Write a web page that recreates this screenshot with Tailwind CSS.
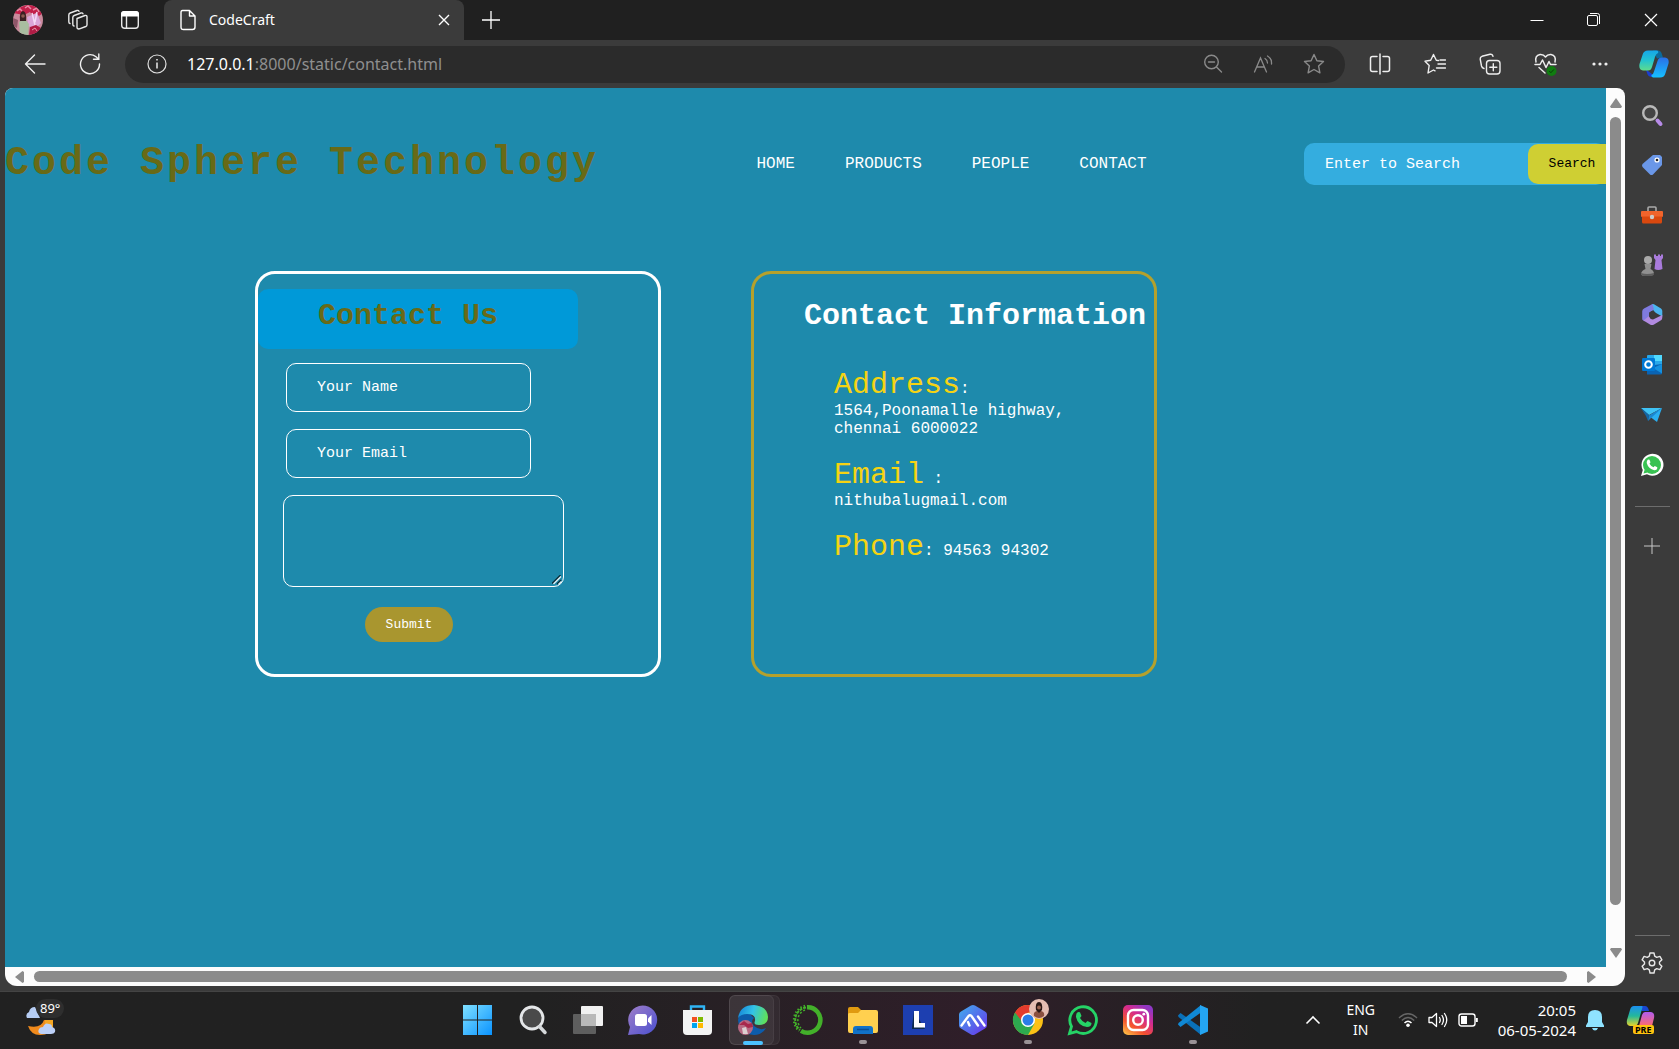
<!DOCTYPE html>
<html lang="en">
<head>
<meta charset="utf-8">
<title>CodeCraft</title>
<script src="https://cdn.jsdelivr.net/npm/@tailwindcss/browser@4"></script>
</head>
<body class="h-screen overflow-hidden flex flex-col bg-[#3b3b3b] text-white font-['Noto_Sans',sans-serif]">

<!-- tab strip -->
<div class="h-10 shrink-0 flex items-stretch bg-[#202020]">
  <div class="w-[164px] flex items-center pl-[13px] gap-[23px] bg-[#202020]">
    <button aria-label="Profile"><svg width="30" height="30" viewBox="0 0 30 30"><defs><clipPath id="pf"><circle cx="15" cy="15" r="15"/></clipPath></defs><g clip-path="url(#pf)"><rect width="30" height="30" fill="#c98a9c"/><path d="M0 8 8 2l6-2h12l4 8-4 3-3-3-4 2-2-3-6 3z" fill="#c2204a"/><path d="M4 6l3-2 2 2M12 3l3-2 3 3M20 5l4-2 2 4" stroke="#e98aa6" stroke-width="1.500" fill="none"/><path d="M14 12l10-4 4 10-6 6-7-3z" fill="#dba6d8"/><path d="M19 8l3 12M24 7l-2 10" stroke="#f3d9f5" stroke-width="1.500"/><path d="M6 17l6-3 4 5-1 12H7z" fill="#a9bda0"/><path d="M7 16q-1-9 3-10 4 1 3 10z" fill="#3a1f22"/><circle cx="10" cy="11" r="1.800" fill="#8a5a50"/><path d="M17 22l6-2 5 3-3 7h-9z" fill="#b01c45"/><path d="M19 25l3-2 2 3" stroke="#e79ab0" fill="none"/><path d="M0 13l5 2-1 8-4-2z" fill="#8e5668"/></g></svg></button>
    <button aria-label="Workspaces"><svg width="24" height="24" viewBox="0 0 24 24" fill="none" stroke="#e8e8e8" stroke-width="1.400" stroke-linejoin="round" stroke-linecap="round"><path d="M11 10.500l8-3q2-.5 2 1.300v8q0 1.200-1.200 1.700l-6.300 2.300q-2.500.6-2.500-1.500z"/><path d="M8 18q-1.200-.3-1.200-1.800V9.500q0-1.500 1.400-2L15 5q1.500-.4 2 .8"/><path d="M4 15.500q-1.200-.3-1.200-1.800V7q0-1.500 1.400-2L11 2.500q1.500-.4 2 .8"/></svg></button>
    <button aria-label="Tab actions" class="ml-[5px]"><svg width="24" height="24" viewBox="0 0 24 24"><rect x="3.700" y="3.700" width="16.600" height="16.600" rx="3" fill="none" stroke="#e8e8e8" stroke-width="1.400"/><path d="M3 8.500V6q0-3 3-3h12q3 0 3 3v2.500z" fill="#fff"/><path d="M8.500 8v12" stroke="#e8e8e8" stroke-width="1.400"/></svg></button>
  </div>
  <div class="w-[300px] flex items-center rounded-t-lg bg-[#3b3b3b] pl-[15px] pr-3">
    <svg width="18" height="22" viewBox="0 0 18 22" fill="none" stroke="#fff" stroke-width="1.400" stroke-linejoin="round"><path d="M3.500 1.500h7l5.500 5.500v11q0 2.500-2.500 2.500h-9Q2 20.500 2 18V3.500q0-2 1.500-2zM10.500 1.500V7H16"/></svg>
    <span class="ml-3 text-sm">CodeCraft</span>
    <button aria-label="Close tab" class="ml-auto"><svg width="16" height="16" viewBox="0 0 16 16" stroke="#fff" stroke-width="1.400"><path d="M3 3l10 10M13 3L3 13"/></svg></button>
  </div>
  <button aria-label="New tab" class="ml-[18px]"><svg width="18" height="18" viewBox="0 0 18 18" stroke="#fff" stroke-width="1.300"><path d="M9 0v18M0 9h18"/></svg></button>
  <div class="ml-auto flex items-center gap-[41px] pr-5">
    <button aria-label="Minimize"><svg width="16" height="16" viewBox="0 0 16 16" stroke="#fff"><path d="M1.500 8.500h13"/></svg></button>
    <button aria-label="Restore"><svg width="16" height="16" viewBox="0 0 16 16" fill="none" stroke="#fff"><rect x="1.500" y="3.500" width="10" height="10" rx="1.500"/><path d="M4 1.500h7.500q2 0 2 2V12"/></svg></button>
    <button aria-label="Close"><svg width="16" height="16" viewBox="0 0 16 16" stroke="#fff" stroke-width="1.200"><path d="M2 2l12 12M14 2L2 14"/></svg></button>
  </div>
</div>

<!-- toolbar -->
<div class="h-12 shrink-0 flex items-center pr-[10px]">
  <button aria-label="Back" class="ml-6"><svg width="22" height="22" viewBox="0 0 22 22" fill="none" stroke="#f0f0f0" stroke-width="1.400" stroke-linecap="round" stroke-linejoin="round"><path d="M21 11H1.500M10.500 2l-9 9 9 9"/></svg></button>
  <button aria-label="Refresh" class="ml-[33px]"><svg width="22" height="22" viewBox="0 0 22 22" fill="none" stroke="#f0f0f0" stroke-width="1.400" stroke-linecap="round"><path d="M20.500 11A9.500 9.500 0 1 1 17 3.800L19.500 6M19.800 1v5.300h-5.300"/></svg></button>
  <div class="flex-1 ml-6 h-[37px] rounded-full bg-[#2b2b2b] flex items-center pl-[22px] pr-5">
    <svg width="20" height="20" viewBox="0 0 20 20" fill="none" stroke="#e0e0e0" stroke-width="1.200"><circle cx="10" cy="10" r="9"/><path d="M10 8.500v6M10 5v1.600" stroke-width="1.600"/></svg>
    <span class="ml-5 text-base text-[#8f8f8f]"><span class="text-white">127.0.0.1</span>:8000/static/contact.html</span>
    <div class="ml-auto flex items-center gap-[30px] text-[#8a8a8a]">
      <button aria-label="Zoom out"><svg width="20" height="20" viewBox="0 0 20 20" fill="none" stroke="currentColor" stroke-width="1.400" stroke-linecap="round"><circle cx="8.500" cy="8" r="6.800"/><path d="M5.500 8h6M13.500 13l5 5"/></svg></button>
      <button aria-label="Read aloud"><svg width="20" height="20" viewBox="0 0 20 20" fill="none" stroke="currentColor" stroke-width="1.300" stroke-linecap="round"><path d="M1.500 18L7.500 4l6 14M3.800 13h7.500M12 4.500q2.500 1.500 2.500 4.500M14.500 2q4.500 2.500 4 8"/></svg></button>
      <button aria-label="Favourite"><svg width="22" height="22" viewBox="0 0 22 22" fill="none" stroke="currentColor" stroke-width="1.400" stroke-linejoin="round"><path d="M11 1.500l2.900 6.200 6.600.8-4.900 4.600 1.300 6.700L11 16.500l-5.900 3.300 1.300-6.700L1.500 8.500l6.600-.8z"/></svg></button>
    </div>
  </div>
  <div class="ml-6 flex items-center gap-[33px]">
    <button aria-label="Split screen"><svg width="22" height="22" viewBox="0 0 22 22" fill="none" stroke="#eee" stroke-width="1.500" stroke-linecap="round"><path d="M8 3.500H3.500Q1.500 3.500 1.500 5.500v11q0 2 2 2H8M14 3.500h4.500q2 0 2 2v11q0 2-2 2H14M11 1v20"/></svg></button>
    <button aria-label="Favourites"><svg width="22" height="22" viewBox="0 0 22 22" fill="none" stroke="#eee" stroke-width="1.400" stroke-linejoin="round" stroke-linecap="round"><path d="M14.500 7.500l-2.200-.2L9.500 1.500 6.700 7.300l-5.700.9 4.200 4.300L4 20l5.500-3 1.500.8M14 11h7.500M12.500 15h9M16 7h5.500"/></svg></button>
    <button aria-label="Collections"><svg width="22" height="22" viewBox="0 0 22 22" fill="none" stroke="#eee" stroke-width="1.400" stroke-linejoin="round" stroke-linecap="round"><rect x="7.500" y="7.500" width="13.500" height="13.500" rx="3"/><path d="M14.300 10.800v7M10.800 14.300h7M5 15.500Q3 15 2.500 13L1.200 6Q1 4 3 3.300l8-2q2.500-.5 3 2"/></svg></button>
    <button aria-label="Browser essentials"><svg width="23" height="23" viewBox="0 0 23 23" fill="none" stroke="#eee" stroke-width="1.500" stroke-linejoin="round" stroke-linecap="round"><path d="M2 9Q.5 2.500 6 1.500q3.500-.3 5.500 2.500Q13.500 1.200 17 1.500q5.500 1 4 7.500M1 11.500h5L8.500 7l3.500 7.500 3-6 1.500 3H22M5 14.500l6 5.500"/><circle cx="17.500" cy="18" r="5" fill="#107c10" stroke="none"/><path d="M15.500 18.300l1.400 1.400 2.800-3" stroke="#0a3c0a" stroke-width="1"/></svg></button>
    <button aria-label="Settings and more"><svg width="20" height="20" viewBox="0 0 20 20" fill="#eee"><circle cx="4" cy="10" r="1.600"/><circle cx="10" cy="10" r="1.600"/><circle cx="16" cy="10" r="1.600"/></svg></button>
    <button aria-label="Copilot" class="-ml-1"><svg width="30" height="28" viewBox="0 0 30 28"><defs><linearGradient id="cg" x1="0" y1="0" x2="0" y2="1"><stop stop-color="#16a6e8"/><stop offset=".5" stop-color="#23c3cf"/><stop offset="1" stop-color="#5fdc8c"/></linearGradient><linearGradient id="cb" x1="0" y1="0" x2="0" y2="1"><stop stop-color="#2a6fe8"/><stop offset="1" stop-color="#16c0ff"/></linearGradient></defs><path d="M14 .5h5q3 0 4 4l1 3-6 1z" fill="#0b6a9c"/><path d="M7 19.500l10 7.500h-4q-4 0-5-4z" fill="#1a3fd0"/><path d="M9 .5h8q3 0 2 2.500-2 .5-3 4l-3 10q-1 3.500-4 3.500H4Q-.5 20 .5 14L3.500 5q1-4.500 5.500-4.500z" fill="url(#cg)"/><path d="M21 27.500h-7q-2-.5-1.500-2.500 2-1 2.500-3.500L18.500 11q1-3.500 4-3.500H26q4.500.5 3.500 6L26.500 23q-1 4.500-5.500 4.500z" fill="url(#cb)"/></svg></button>
  </div>
</div>

<!-- browser content -->
<div class="flex-1 min-h-0 flex pl-[5px]">
  <div class="flex-1 min-w-0 mb-[5px] flex flex-col rounded-tl-lg rounded-tr-lg rounded-b-xl overflow-hidden bg-[#fcfcfc]">
    <div class="flex-1 min-h-0 flex">
      <main class="flex-1 min-w-0 overflow-hidden bg-[#1e8aac] font-['Liberation_Mono',monospace]">
        <header class="h-[152px] flex items-center justify-between">
          <h1 class="text-[40px] leading-[46px] tracking-[3px] font-bold text-[#686a17] whitespace-nowrap">Code Sphere Technology</h1>
          <nav class="flex gap-[50px] text-base leading-5">
            <a href="#">HOME</a><a href="#">PRODUCTS</a><a href="#">PEOPLE</a><a href="#">CONTACT</a>
          </nav>
          <form class="w-[302px] h-[42px] flex items-center rounded-[10px] bg-[#34addf]">
            <input type="text" aria-label="Search" placeholder="Enter to Search" class="w-56 shrink-0 h-full pl-[21px] bg-transparent text-[15px] placeholder:text-white outline-none">
            <button type="button" class="w-[88px] shrink-0 h-10 rounded-[10px] bg-[#cfcf33] text-[13px] text-black">Search</button>
          </form>
        </header>
        <div class="mt-[31px] pl-[250px] flex gap-[90px]">
          <section class="w-[406px] h-[406px] shrink-0 border-[3px] border-white rounded-[20px] pt-[15px]">
            <h2 class="w-80 h-[60px] rounded-[10px] bg-[#0099d8] pl-15 pt-[10px] text-[30px] leading-[34px] font-bold text-[#686a17]">Contact Us</h2>
            <form class="mt-[14px] pl-[25px] flex flex-col items-start">
              <input type="text" aria-label="Your Name" placeholder="Your Name" class="ml-[3px] w-[245px] h-[49px] border border-white rounded-[10px] px-[30px] text-[15px] placeholder:text-white outline-none">
              <input type="email" aria-label="Your Email" placeholder="Your Email" class="mt-[17px] ml-[3px] w-[245px] h-[49px] border border-white rounded-[10px] px-[30px] text-[15px] placeholder:text-white outline-none">
              <div class="relative mt-[17px]">
                <textarea aria-label="Message" class="block w-[281px] h-[92px] border border-white rounded-[10px] bg-transparent resize-none outline-none"></textarea>
                <svg class="absolute right-[2px] bottom-[2px]" width="10" height="10" viewBox="0 0 10 10" stroke-width="1.300"><path d="M0 8.500L8.500 0M5 9l4-4" stroke="#0c2b36"/><path d="M1.500 9L9 1.500M6.500 9.500l3-3" stroke="#e5eef1"/></svg>
              </div>
              <button type="button" class="mt-5 ml-[82px] w-[88px] h-[35px] rounded-full bg-[#a9962f] text-[13px]">Submit</button>
            </form>
          </section>
          <section class="w-[406px] h-[406px] shrink-0 border-[3px] border-[#b5a12c] rounded-[20px] pt-[25px] pl-[50px]">
            <h2 class="text-[30px] leading-[34px] font-bold whitespace-nowrap">Contact Information</h2>
            <address class="not-italic mt-[35px] ml-[30px] flex flex-col gap-5 text-base leading-[18px]">
              <p><span class="text-[30px] leading-[34px] text-[#f5d313]">Address</span>:<br>1564,Poonamalle highway,<br>chennai 6000022</p>
              <p><span class="text-[30px] leading-[34px] text-[#f5d313]">Email</span> :<br>nithubalugmail.com</p>
              <p><span class="text-[30px] leading-[34px] text-[#f5d313]">Phone</span>: 94563 94302</p>
            </address>
          </section>
        </div>
      </main>
      <!-- vertical scrollbar -->
      <div class="w-[19px] flex flex-col items-center pt-[10px] pb-[9px] gap-[9px]">
        <svg width="12" height="10" viewBox="0 0 12 10" fill="#8b8b8b"><path d="M6 0l6 8.500L11 10H1L0 8.500z"/></svg>
        <div class="w-[11px] flex-1 mb-[34px] rounded-full bg-[#8b8b8b]"></div>
        <svg width="12" height="10" viewBox="0 0 12 10" fill="#8b8b8b"><path d="M6 10l6-8.500L11 0H1L0 1.500z"/></svg>
      </div>
    </div>
    <!-- horizontal scrollbar -->
    <div class="h-[19px] shrink-0 flex items-center pl-[10px] pr-[29px] gap-[10px]">
      <svg width="9" height="12" viewBox="0 0 9 12" fill="#8b8b8b"><path d="M0 6l7.500-6L9 1v10l-1.500 1z"/></svg>
      <div class="h-[11px] flex-1 mr-[10px] rounded-full bg-[#8b8b8b]"></div>
      <svg width="9" height="12" viewBox="0 0 9 12" fill="#8b8b8b"><path d="M9 6L1.500 0 0 1v10l1.500 1z"/></svg>
    </div>
  </div>

  <!-- sidebar -->
  <aside class="w-[54px] shrink-0 flex flex-col items-center pt-[15px]">
    <div class="flex flex-col gap-[26px]">
      <button aria-label="Search" class="h-6"><svg width="24" height="24" viewBox="0 0 24 24"><circle cx="10" cy="10" r="6.800" fill="#444" stroke="#b9b9b9" stroke-width="2.400"/><path d="M17.500 17.500l3 3.500" stroke="#b78be8" stroke-width="4" stroke-linecap="round"/></svg></button>
      <button aria-label="Shopping" class="h-6"><svg width="24" height="24" viewBox="0 0 24 24"><path d="M13 2h7l2 2v8l-9 9.500q-1.500 1-3 0L2.500 14q-1-1.500 0-3z" fill="#6a97e8"/><circle cx="17" cy="7" r="2.600" fill="#fff"/><circle cx="17" cy="7" r="1.300" fill="#222"/></svg></button>
      <button aria-label="Tools" class="h-6"><svg width="24" height="24" viewBox="0 0 24 24"><path d="M8 8V5q0-1 1-1h6q1 0 1 1v3" fill="none" stroke="#aaa" stroke-width="1.600"/><rect x="1" y="8" width="22" height="6" rx="1" fill="#f0642c"/><path d="M2 13.500h20V19q0 1.500-1.500 1.500h-17Q2 20.500 2 19z" fill="#d9480f"/><circle cx="12" cy="14" r="2.200" fill="#ccc"/></svg></button>
      <button aria-label="Games" class="h-6"><svg width="24" height="24" viewBox="0 0 24 24"><path d="M14 1.500h2V3h2V1.500h2V3h1V1.500h2V5l-1.500 2 1 9q-4.500 2-8 0l1-9L14 5z" fill="#a97bdc"/><circle cx="8" cy="7" r="4" fill="#aaa"/><path d="M4.500 11h7l-1 5q3 1 3.500 4.500-.5 2.500-7 2.500T1 20.500Q2 17 5.500 16z" fill="#909090"/><path d="M1 20q6 2 13 0v1.500Q13 23 7.500 23T1 21.500z" fill="#5e5e5e"/></svg></button>
      <button aria-label="Microsoft 365" class="h-6"><svg width="24" height="24" viewBox="0 0 24 24"><path d="M12 1.200q1-.5 2 0l7 4.300q1.300 1 1.300 2.500v5.500l-6.800-3.800L10 7z" fill="#4bb5f0"/><path d="M12.500 1L4 5.500Q2.200 6.500 2.200 8.500v8l2 1.800 5-3V9.500L14 6.500z" fill="#7f7be0"/><path d="M9 13l-5.500 4.500 6.500 4q2 1.200 4 0l7-4.200q1.300-.8 1.300-2.800V12L13 16.500q-3 0-4-3.500z" fill="#b18ae0"/><path d="M9.200 10l4-3 3.300 4-1 4-4 .8-2.300-2.500z" fill="#3b3b3b"/></svg></button>
      <button aria-label="Outlook" class="h-6"><svg width="24" height="24" viewBox="0 0 24 24"><rect x="7" y="2" width="15" height="12" rx="1" fill="#28a8ea"/><path d="M14 2h8v6h-8z" fill="#50d9ff"/><path d="M7 13l15-2v9q0 1.500-1.500 1.500H7z" fill="#0a64b4"/><path d="M22 11v9.500L13 15z" fill="#1490df"/><rect x="2" y="5" width="13" height="13" rx="1.200" fill="#0078d4"/><circle cx="8.500" cy="11.500" r="3.300" fill="none" stroke="#fff" stroke-width="2"/></svg></button>
      <button aria-label="Drop" class="h-6"><svg width="24" height="24" viewBox="0 0 24 24"><path d="M1 5h21L9 12z" fill="#3fc3f5"/><path d="M22 5l-5 14-8-6z" fill="#2aaef0"/><path d="M1 5l8 7-1 6-2-5z" fill="#1267a8"/><path d="M9 12.500L22 5 11 15l-3 3z" fill="#1a86d0"/></svg></button>
      <button aria-label="WhatsApp" class="h-6"><svg width="24" height="24" viewBox="0 0 24 24"><path d="M1 23l1.800-6A11 11 0 1 1 7 21.300z" fill="#fff"/><circle cx="12" cy="12" r="9" fill="#38c252"/><path d="M3.500 20.500l1.200-4 3 3z" fill="#38c252"/><path d="M8 6.500l1.500.2 1 2.600-1 1.500q1.500 2.600 4 3.500l1.300-1.300 2.500 1.300q.3 3-3 3Q8.500 16 6.700 10 6.500 7.500 8 6.500z" fill="#fff"/></svg></button>
    </div>
    <div class="w-[35px] h-px bg-[#6d6d6d] mt-[29px]"></div>
    <button aria-label="Customize" class="mt-[31px]"><svg width="16" height="16" viewBox="0 0 16 16" stroke="#c8c8c8"><path d="M8 0v16M0 8h16"/></svg></button>
    <div class="w-[35px] h-px bg-[#6d6d6d] mt-auto"></div>
    <button aria-label="Settings" class="mt-[15px] mb-4"><svg width="24" height="24" viewBox="0 0 24 24" fill="none" stroke="#e8e8e8" stroke-width="1.400" stroke-linejoin="round"><path d="M10 2h4l.7 3.200 2 1.200 3.200-1 2 3.400-2.400 2.200v2l2.400 2.200-2 3.400-3.200-1-2 1.200L14 22h-4l-.7-3.200-2-1.200-3.200 1-2-3.400L4.500 13v-2L2.100 8.800l2-3.400 3.200 1 2-1.200z"/><circle cx="12" cy="12" r="2.800"/></svg></button>
  </aside>
</div>

<!-- taskbar -->
<footer class="h-[58px] shrink-0 grid grid-cols-[462px_1fr_auto] items-center border-t border-[#444] pb-[2px] bg-linear-to-r from-[#212121] from-32% via-[#2f1e29] via-58% to-[#212121] to-75%">
  <button class="relative ml-[26px] w-10 h-[42px]" aria-label="Weather">
    <svg width="32" height="36" viewBox="0 0 32 36"><path d="M1 16q-2-4 2-6 1-5 6-5l5 11z" fill="#b6cdf4"/><path d="M18 18q8 0 9 6-2 9-13 9Q5 33 2 24q13 3 16-6z" fill="#f08a1c"/><path d="M19 18h8v8h-8z" fill="#f5a623"/><path d="M15 32q-4-1-2-5 1-2 4-2 2-5 6-3 3 0 3 3 4 1 3 5-1 2-4 2z" fill="#bcd0f7"/></svg>
    <span class="absolute left-[10px] top-0 rounded-full bg-[#2e2e2e] px-1 text-[13px] leading-[19px]">89°</span>
  </button>
  <div class="flex items-center gap-[23px]">
    <button aria-label="Start"><svg width="32" height="32" viewBox="0 0 32 32"><defs><linearGradient id="win" x1="0" y1="0" x2="1" y2="1"><stop stop-color="#7fe0ff"/><stop offset="1" stop-color="#0a93ff"/></linearGradient></defs><path fill="url(#win)" d="M1 1h14v14.500H1zM16 1h14v14.500H16zM1 16.500h14V31H1zM16 16.500h14V31H16z"/></svg></button>
    <button aria-label="Search"><svg width="32" height="32" viewBox="0 0 32 32"><circle cx="15" cy="14" r="11" fill="#4a4a4a" stroke="#e4e6e8" stroke-width="2.800"/><path d="M22.500 22.500l5.500 6" stroke="#d5d8da" stroke-width="3.500" stroke-linecap="round"/></svg></button>
    <button aria-label="Task view"><svg width="32" height="32" viewBox="0 0 32 32"><rect x="9" y="2" width="22" height="20" rx="1" fill="#f1f1f1"/><rect x="1" y="10" width="23" height="20" rx="1" fill="#5e5e5e"/><path d="M9 10h15v12H9z" fill="#b9b9b9"/></svg></button>
    <button aria-label="Chat"><svg width="32" height="32" viewBox="0 0 32 32"><defs><linearGradient id="ch" x1="0" y1="0" x2="1" y2="1"><stop stop-color="#a07fc8"/><stop offset="1" stop-color="#4a4fd0"/></linearGradient></defs><path d="M1 31l2-8A14.500 14.500 0 1 1 12 30z" fill="url(#ch)"/><rect x="8" y="10" width="12" height="12" rx="2.500" fill="#fff"/><path d="M21 14.500l3.500-3.500v10L21 17.500z" fill="#fff"/></svg></button>
    <button aria-label="Store"><svg width="32" height="32" viewBox="0 0 32 32"><path d="M9 7V2.500h13V7" fill="none" stroke="#2fb4f4" stroke-width="2.400"/><path d="M1 6h29v21q0 4-4 4H5q-4 0-4-4z" fill="#f3f3f3"/><path fill="#f25022" d="M10 13h5v5h-5z"/><path fill="#7fba00" d="M16 13h5v5h-5z"/><path fill="#00a4ef" d="M10 19h5v5h-5z"/><path fill="#ffb900" d="M16 19h5v5h-5z"/></svg></button>
    <button aria-label="Edge" class="relative -mx-2 w-12 h-[50px] flex items-center justify-center"><span class="absolute inset-y-0 left-0 -right-[3px] rounded-md bg-white/5 border border-white/5"></span><span class="absolute inset-y-0 left-0 right-[3px] rounded-md bg-white/5 border border-white/5"></span><svg class="relative" width="32" height="32" viewBox="0 0 32 32"><defs><linearGradient id="eg" x1="0" y1=".2" x2="1" y2=".4"><stop stop-color="#1584d8"/><stop offset=".5" stop-color="#33c3e8"/><stop offset="1" stop-color="#5fe05a"/></linearGradient></defs><path d="M1 16Q2 8 12 9l5 5q-4 3 0 8 6 5 12 2-4 7-12 7Q2 30 1 16z" fill="#0d5cab"/><path d="M1 14Q3 1 17 1q13 1 14 12 0 8-9 8-6 0-4-4 1-7-8-7-6 0-9 4z" fill="url(#eg)"/><circle cx="8.500" cy="23.500" r="7.500" fill="#b76882"/><path d="M2 21l5-4 4 3 4-1 1 4-5 1-4-3z" fill="#a8284c"/><path d="M5 24l4-1 2 7H6z" fill="#dccfd0"/></svg><span class="absolute bottom-0 left-3.5 w-5 h-1 rounded-full bg-[#4cc2ff]"></span></button>
    <button aria-label="Anaconda"><svg width="32" height="32" viewBox="0 0 32 32" fill="none" stroke="#43b02a"><path d="M15 3.300A12.700 12.700 0 1 1 9 26.800" stroke-width="4.500"/><path d="M14 3.500A12.700 12.700 0 0 0 8 26" stroke-width="2" stroke-dasharray="3 1"/><path d="M13 1.800A14.500 14.500 0 0 0 7 27" stroke-width="2" stroke-dasharray="1.500 2"/><path d="M13 6A11 11 0 0 0 9 24" stroke-width="1.500" stroke-dasharray="2 2"/></svg></button>
    <button aria-label="File Explorer" class="relative"><svg width="32" height="32" viewBox="0 0 32 32"><path d="M1 5q0-2 2-2h8l3 3v6H1z" fill="#e09a10"/><path d="M1 10q0-1 2-1h8l3-3h15q2 0 2 2v19q0 2-2 2H3q-2 0-2-2z" fill="#ffd04f"/><path d="M6 30v-5q0-3 3-3h14q3 0 3 3v5z" fill="#1172c8"/><path d="M10 25.500h12" stroke="#0a4e94" stroke-width="1.500"/></svg><span class="absolute -bottom-2 left-3 w-2 h-1 rounded-full bg-[#9a9296]"></span></button>
    <button aria-label="LockDown"><svg width="32" height="32" viewBox="0 0 32 32"><path fill="#1d3fb0" d="M1 1h30v30H1z"/><path d="M12 7l-2 16v2h13" fill="#0e2b4c"/><path d="M12 7h5v12h6v4.500H12z" fill="#fff"/></svg></button>
    <button aria-label="AI app"><svg width="32" height="32" viewBox="0 0 32 32"><defs><linearGradient id="ai" x1="0" y1="0" x2="1" y2="1"><stop stop-color="#3fb0ee"/><stop offset="1" stop-color="#6a2fe8"/></linearGradient></defs><path d="M14 1.500q2-1 4 0l10 6q2 1 2 3v11q0 2-2 3l-10 6q-2 1-4 0l-10-6q-2-1-2-3v-11q0-2 2-3z" fill="url(#ai)"/><path d="M4.500 21.500L11.500 12q1.500-1.500 3 0l6.500 9.500M12.500 21.500L11 18M21 12.500l6.500 9" fill="none" stroke="#fff" stroke-width="2.400" stroke-linecap="round"/></svg></button>
    <button aria-label="Chrome" class="relative"><svg class="overflow-visible" width="32" height="32" viewBox="0 0 32 32"><circle cx="16" cy="16" r="15" fill="#fbc116"/><path d="M16 16l-13-7.500A15 15 0 0 0 16 31l6.500-11.500z" fill="#2da94f"/><path d="M3 8.500A15 15 0 0 1 29 8.500H16l-6 9z" fill="#e33b2e"/><circle cx="16" cy="16" r="7" fill="#fff"/><circle cx="16" cy="16" r="5.500" fill="#2b7de9"/><circle cx="27" cy="5" r="10" fill="#e5bdb2"/><path d="M22 12q-1-4 3-5h4q4 1 3 5-5 4-10 0z" fill="#8a5040"/><path d="M24 6q-1-8 3-8t3 8l-3 3z" fill="#2a1715"/><circle cx="27" cy="3.500" r="2" fill="#9a6250"/></svg><span class="absolute -bottom-2 left-3 w-2 h-1 rounded-full bg-[#9a9296]"></span></button>
    <button aria-label="WhatsApp"><svg width="32" height="32" viewBox="0 0 32 32"><path d="M2.500 29.500l2-7A13.300 13.300 0 1 1 9.500 27.600z" fill="none" stroke="#25d366" stroke-width="2.800"/><path d="M11 8l2 .3 1.500 3.700-1.500 2q2 3.500 5.500 5l2-2 4 2q.2 4-4.500 4Q11 22 9 13q-.2-4 2-5z" fill="#25d366"/></svg></button>
    <button aria-label="Instagram"><svg width="32" height="32" viewBox="0 0 32 32"><defs><linearGradient id="ig" x1="0" y1="1" x2=".7" y2="0"><stop stop-color="#ffd04a"/><stop offset=".35" stop-color="#f5532c"/><stop offset=".7" stop-color="#d42a8f"/><stop offset="1" stop-color="#9037c4"/></linearGradient></defs><rect x="1" y="1" width="30" height="30" rx="5" fill="url(#ig)"/><g fill="none" stroke="#fff" stroke-width="2.400"><rect x="6" y="6" width="20" height="20" rx="5.500"/><circle cx="16" cy="16" r="4.800"/></g><circle cx="21.800" cy="10.200" r="1.400" fill="#fff"/></svg></button>
    <button aria-label="Visual Studio Code" class="relative"><svg width="32" height="32" viewBox="0 0 32 32"><path d="M1 11.500l2.500-2.500L24 23.500V31L1.500 13z" fill="#0a70b8"/><path d="M1 20.500L3.500 23 24 8.500V1L1.500 19z" fill="#1088d4"/><path d="M23 1l8 3.500v23L23 31z" fill="#24a5f2"/></svg><span class="absolute -bottom-2 left-3 w-2 h-1 rounded-full bg-[#9a9296]"></span></button>
  </div>
  <div class="flex items-center">
    <button aria-label="Show hidden icons"><svg width="16" height="16" viewBox="0 0 16 16" fill="none" stroke="#fff" stroke-width="1.600"><path d="M1.500 11.500L8 5l6.500 6.500"/></svg></button>
    <button class="ml-[25px] w-[30px] flex justify-center text-sm leading-5">ENG<br>IN</button>
    <div class="ml-[22px] flex items-center gap-[10px]">
      <svg width="20" height="20" viewBox="0 0 20 20" fill="none" stroke-width="1.500"><path d="M1 8q9-8.500 18 0M3.800 10.500q6.200-6 12.400 0" stroke="#666"/><path d="M6.500 13q3.500-3.500 7 0" stroke="#fff"/><circle cx="10" cy="15.300" r="1.800" fill="#fff"/></svg>
      <svg width="20" height="20" viewBox="0 0 20 20" fill="none" stroke="#fff" stroke-width="1.300" stroke-linejoin="round" stroke-linecap="round"><path d="M1 7.500h3L8.500 3.500v13L4 12.500H1zM11.500 7.500q1.500 2.500 0 5M14 5.500q3 4.500 0 9M16.500 3.500q4.500 6.500 0 13"/></svg>
      <svg width="20" height="20" viewBox="0 0 20 20" fill="none" stroke="#fff" stroke-width="1.400"><rect x="1" y="4" width="16" height="12" rx="2.500"/><path d="M18.800 8v4" stroke-width="2"/><path d="M3 6h6v8H3z" fill="#fff" stroke="none"/></svg>
    </div>
    <button class="ml-5 text-right text-[15px] leading-5">20:05<br>06-05-2024</button>
    <svg class="ml-[10px]" width="18" height="22" viewBox="0 0 18 22" fill="#8fe3ff"><path d="M9 1q7 0 7 7v5l2 3.500V18H0v-1.500L2 13V8q0-7 7-7zM6 19h6q-1 2.500-3 2.500T6 19z"/></svg>
    <button aria-label="Copilot preview" class="relative ml-[21px] mr-[22px] w-8 h-8"><svg width="32" height="32" viewBox="0 0 32 32"><defs><linearGradient id="c1" x1="0" y1="0" x2="0" y2="1"><stop stop-color="#1b8ff0"/><stop offset=".5" stop-color="#23b89a"/><stop offset="1" stop-color="#e8d52a"/></linearGradient><linearGradient id="c2" x1="0" y1="0" x2="0" y2="1"><stop stop-color="#b05cf0"/><stop offset="1" stop-color="#ff6a6a"/></linearGradient></defs><path d="M12 2h8q3 0 4 5h-7z" fill="#1846d0"/><path d="M9 2h8q1 0 0 3l-4 14q-1 3-4 3H5q-4-.5-3-6L5 6q1-4 4-4z" fill="url(#c1)"/><path d="M20 8h6q4 .5 3 6l-2 8H14l3-11q1-3 3-3z" fill="url(#c2)"/></svg><span class="absolute left-2 top-[21px] rounded-xs bg-[#fdc20f] px-[2px] text-[9px] leading-[9px] font-bold text-black">PRE</span></button>
  </div>
</footer>
</body>
</html>
